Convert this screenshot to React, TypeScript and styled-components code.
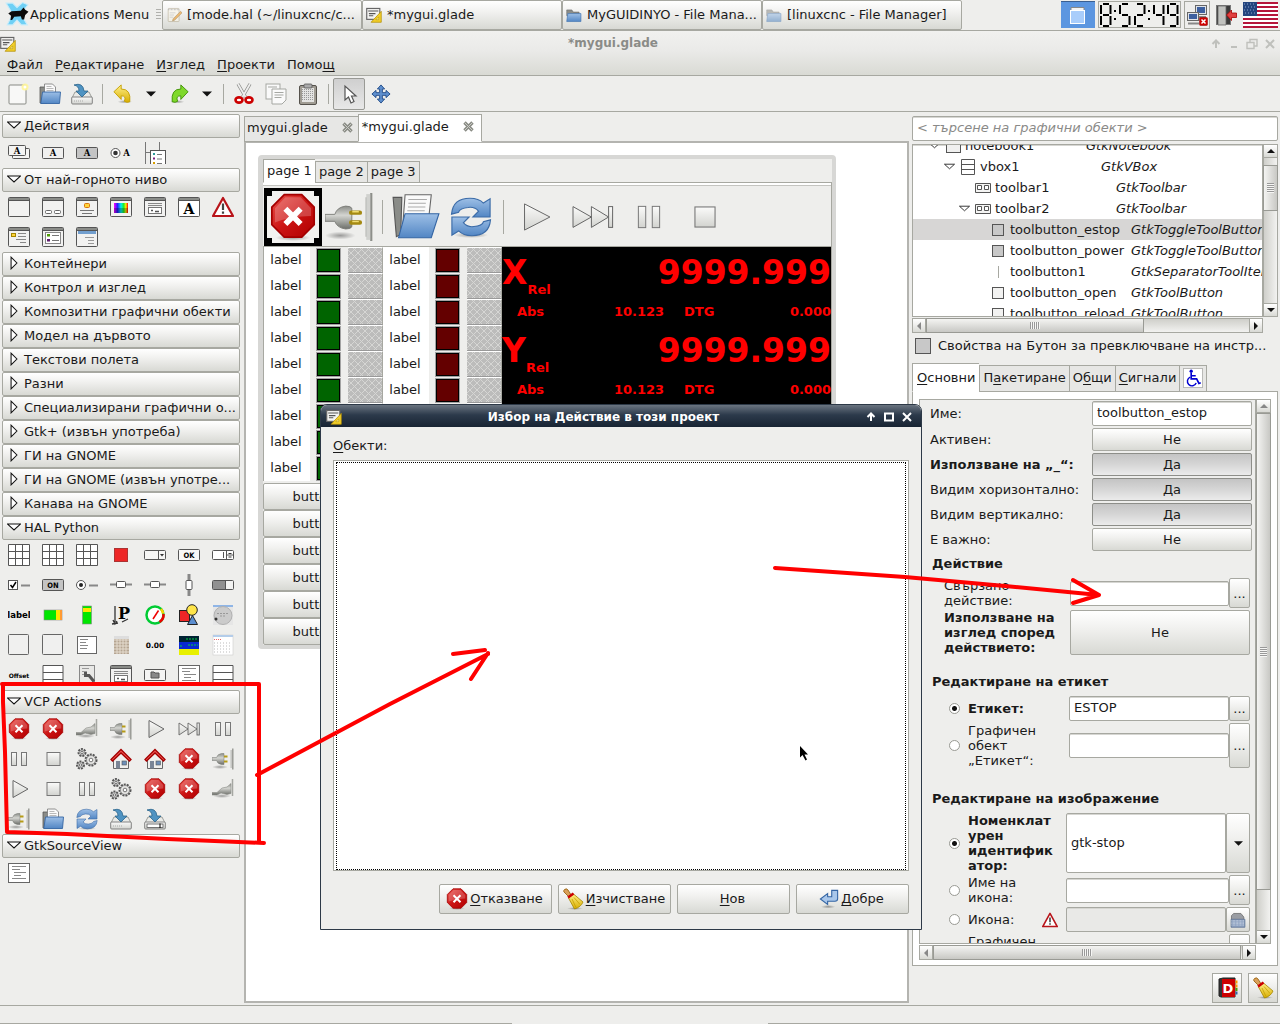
import React from 'react';
import styled, { createGlobalStyle, css } from 'styled-components';

const c = {
  bg: '#eeeeec',
  line: '#a7a8a1',
  soft: '#d6d6d2',
  text: '#1a1a1a',
  red: '#ff0000',
};
const raised = 'linear-gradient(#ffffff, #f1f1ef 40%, #d8d9d4)';
const pressed = 'linear-gradient(#c4c4c4, #d6d6d6 50%, #ebebeb)';

const Global = createGlobalStyle`
  * { box-sizing: border-box; }
  body { margin: 0; background: ${c.bg}; }
  body, button, input, select { font: 13px/15px "DejaVu Sans", sans-serif; color: ${c.text}; }
  button { padding: 0; margin: 0; border: 0; background: none; }
  u { text-underline-offset: 2px; }
  svg { display: block; flex: none; }
`;

/* ------------------------------------------------------------------ icons */

const HiddenSvg = styled.svg`
  position: absolute;
`;
const Defs = () => (
  <HiddenSvg width="0" height="0" aria-hidden="true">
    <defs>
      <linearGradient id="gRed" x1="0" y1="0" x2="1" y2="1"><stop offset="0" stopColor="#e8504a" /><stop offset=".5" stopColor="#cc1414" /><stop offset="1" stopColor="#b00000" /></linearGradient>
      <linearGradient id="gBlue" x1="0" y1="0" x2="0" y2="1"><stop offset="0" stopColor="#9dbfe6" /><stop offset="1" stopColor="#5286c4" /></linearGradient>
      <linearGradient id="gGrey" x1="0" y1="0" x2="0" y2="1"><stop offset="0" stopColor="#fbfbfa" /><stop offset="1" stopColor="#d2d3cf" /></linearGradient>
      <linearGradient id="gMetal" x1="0" y1="0" x2="0" y2="1"><stop offset="0" stopColor="#8b8d88" /><stop offset=".4" stopColor="#d4d5d1" /><stop offset="1" stopColor="#6d6f6a" /></linearGradient>
      <linearGradient id="gYellow" x1="0" y1="0" x2="0" y2="1"><stop offset="0" stopColor="#fff08a" /><stop offset="1" stopColor="#d9ae00" /></linearGradient>
      <linearGradient id="gRain" x1="0" y1="0" x2="1" y2="0"><stop offset="0" stopColor="#f0f" /><stop offset=".25" stopColor="#22f" /><stop offset=".5" stopColor="#0ee" /><stop offset=".7" stopColor="#2e2" /><stop offset=".85" stopColor="#fe0" /><stop offset="1" stopColor="#f00" /></linearGradient>
      <radialGradient id="gShadow"><stop offset="0" stopColor="#000" stopOpacity=".35" /><stop offset="1" stopColor="#000" stopOpacity="0" /></radialGradient>
    </defs>
  </HiddenSvg>
);

const WinFrame = ({ fill = '#f2f2f1' }: { fill?: string }) => (
  <g><rect x=".5" y="1.5" width="21" height="19" rx="1" fill={fill} stroke="#555" /><rect x="1" y="2" width="20" height="2" fill="#8a8c88" /><path d="M1 4.5h20" stroke="#555" /></g>
);
const T = ({ x, y, s, children, f = 'DejaVu Sans', fill = '#000' }: any) => (
  <text x={x} y={y} fontSize={s} fontWeight="bold" fontFamily={f} textAnchor="middle" fill={fill}>{children}</text>
);
const Vbox = () => <path d="M1 1.5h20v20H1zM1 8.5h20M1 15.5h20" fill="#fff" stroke="#555" />;
const Gear = ({ x, y, r }: any) => (
  <g><circle cx={x} cy={y} r={r} fill="#ddd" stroke="#555" strokeWidth="2" strokeDasharray="2 1" /><circle cx={x} cy={y} r={r - 1} fill="#e6e6e4" stroke="#777" strokeWidth=".7" /><circle cx={x} cy={y} r={r / 3} fill="#fff" stroke="#555" strokeWidth=".8" /></g>
);
const StopShape = ({ cross = 2 }: { cross?: number }) => (
  <g><ellipse cx="11" cy="20.5" rx="8" ry="1.5" fill="url(#gShadow)" />
    <path d="M7 .8h8l5.700 5.700v8L15 20.200H7L1.300 14.500v-8z" fill="url(#gRed)" stroke="#a40000" strokeWidth=".8" />
    <path d="M7.500 2h7l4.800 5v3.500q-9 0-16.600 3V7z" fill="#fff" opacity=".22" />
    <path d="M7.500 7.200l7 7M14.500 7.200l-7 7" stroke="#fff" strokeWidth={cross} /></g>
);
const PlugShape = () => (
  <g><ellipse cx="8" cy="19" rx="8" ry="2" fill="url(#gShadow)" />
    <path d="M0 9.500h4.500q1-3.500 5-4h2.500v11H9.500Q5.500 16 4.500 12.500H0z" fill="url(#gMetal)" stroke="#777974" strokeWidth=".5" />
    <path d="M12 8.500h3.500M12 13.500h3.500" stroke="#b69b17" strokeWidth="2" />
    <path d="M20.800 .5v21" stroke="#8d8f8a" strokeWidth="1.300" /><path d="M19.200 2v18" stroke="#c4c5c2" strokeWidth="1.500" /></g>
);
const BigPlugShape = () => (
  <g><ellipse cx="7" cy="19.500" rx="7" ry="1.800" fill="url(#gShadow)" />
    <path d="M0 9.800h4.500q1-3.300 5-3.800 2.300 0 2.800 1v8.500q-.5 1-2.800 1-4-.5-5-3.500H0z" fill="url(#gMetal)" stroke="#777974" strokeWidth=".4" />
    <path d="M12 9h4M12 13.500h4" stroke="#a48912" strokeWidth="2" strokeLinecap="round" /><path d="M12.500 8.600h3M12.500 13.100h3" stroke="#f0dc70" strokeWidth=".6" />
    <path d="M21.200 0v22" stroke="#8d8f8a" strokeWidth="1" /><path d="M19.800 .5v21" stroke="#d0d1ce" strokeWidth="1.800" /><path d="M18.800 2v18" stroke="#b5b6b2" strokeWidth=".5" /></g>
);
const DriveShape = () => (
  <g><path d="M4 9h14l3 6H1z" fill="#e9eae7" stroke="#888a85" strokeWidth=".8" /><rect x=".7" y="14" width="20.600" height="7" rx="1" fill="url(#gGrey)" stroke="#777" strokeWidth=".9" />
    <path d="M3 2q9-3 10 6h4l-6 6-6-6h3q0-5-5-6z" fill="#4f93c2" stroke="#2b658c" strokeWidth=".8" /></g>
);
const FolderShape = () => (
  <g><path d="M1 20V4h6l1 2v14z" fill="#8a8c88" stroke="#555" strokeWidth=".8" /><path d="M5.500 13V1h8l3 3v9z" fill="#fafafa" stroke="#777" strokeWidth=".8" /><path d="M7.500 3.500h5M7.500 5.500h7M7.500 7.500h7" stroke="#aaa" strokeWidth=".8" />
    <path d="M3.500 9H21.500L20.500 20.500H1.800z" fill="url(#gBlue)" stroke="#3465a4" strokeWidth=".9" /></g>
);
const BigFolderShape = () => (
  <g><path d="M.5 2h4l-.5 17-2 1z" fill="#8a8c88" stroke="#555" strokeWidth=".5" /><path d="M5 14L6 .8h12L17 10z" fill="#fafafa" stroke="#666" strokeWidth=".5" /><path d="M7.500 3h8.500M7.500 4.700h8M7.300 6.400h8M7 8.100h8" stroke="#aaa" strokeWidth=".5" />
    <path d="M6 9.500h15.500L18 20.500H3z" fill="url(#gBlue)" stroke="#3465a4" strokeWidth=".5" /></g>
);
const House = () => (
  <g><path d="M3.500 11L11 4l7.500 7v9.500h-15z" fill="#f0f0ee" stroke="#666" /><path d="M1 11.500L11 1.500l10 10-1.500 1.500L11 5l-8.500 8z" fill="#ef5350" stroke="#a40000" strokeWidth="1.300" /><rect x="6" y="13" width="4" height="7.500" fill="#7a8596" /><rect x="12" y="13" width="4.500" height="4" fill="#6d8fb8" stroke="#555" strokeWidth=".6" /></g>
);
const Broom = () => (
  <g><ellipse cx="13" cy="20.500" rx="8" ry="1.500" fill="url(#gShadow)" /><path d="M2.500 1.500q2-1.500 3.500.5l3.500 5.500-2.500 1.500-5-5q-1-1 .5-2.500z" fill="#d9a05a" stroke="#8f5902" strokeWidth=".8" />
    <path d="M6.500 10l5-4 9.500 8q-2 5-8.500 7z" fill="url(#gYellow)" stroke="#a58600" strokeWidth=".8" /><path d="M10 11l4 8.500M12 9.500l6 7" stroke="#c5a000" strokeWidth=".8" /><path d="M6 9.500l5.500-4" stroke="#cc0000" strokeWidth="2.500" /></g>
);
const GladeShape = () => (
  <g><rect x="1" y="2" width="18" height="15" fill="#f4f4f2" stroke="#666" strokeWidth="1.600" /><path d="M3 5.500h14M4 9h9M4 12h6" stroke="#555" strokeWidth="1.600" /><path d="M21 6v15H7z" fill="#f2cf2a" stroke="#b08c00" /><path d="M17.500 13.500v4h-4z" fill="#fff3a0" stroke="#b08c00" strokeWidth=".8" /></g>
);
const Warn = () => (
  <g><path d="M11 2L21 20H1z" fill="#fff" stroke="#b8141a" strokeWidth="2.200" strokeLinejoin="round" /><path d="M11 7.500v6.500M11 15.500v2.200" stroke="#444" strokeWidth="2.200" /></g>
);
const ReloadShape = () => (
  <g><ellipse cx="11" cy="20.500" rx="9" ry="1.500" fill="url(#gShadow)" /><path d="M.8 9.500Q1.500 1.200 10.500 1.200q4.500 0 7 2.500L21 1.500V11h-9L15 8q-2-2.500-5.500-2Q5 6.500 4.500 8.500z" fill="url(#gBlue)" stroke="#3c6ca8" strokeWidth=".6" />
    <path d="M21.200 12.500q-.7 8.300-9.700 8.300-4.500 0-7-2.500L1 20.500V11h9L7 14q2 2.500 5.500 2 4.500-.5 5-2.500z" fill="url(#gBlue)" stroke="#3c6ca8" strokeWidth=".6" /></g>
);

const art: Record<string, React.ReactNode> = {
  stop: <StopShape />, bigStop: <StopShape cross={2.6} />, plug: <PlugShape />, bigPlug: <BigPlugShape />, bigFolder: <BigFolderShape />,
  plugOff: <g><ellipse cx="10" cy="18" rx="9" ry="2" fill="url(#gShadow)" /><path d="M0 14.500h5l5-4.500 5-1 4-3.500v10l-4 1-6-1.500-4 2H0z" fill="url(#gMetal)" stroke="#8b8d88" strokeWidth=".6" /><path d="M20.500 1v17" stroke="#a5a7a2" strokeWidth="1.500" /></g>,
  play: <path d="M5 2.500L20 11 5 19.500z" fill="url(#gGrey)" stroke="#666" />,
  ff: <g fill="url(#gGrey)" stroke="#666" strokeWidth=".9"><path d="M1 5l9 6-9 6zM10 5l9 6-9 6z" /><rect x="19" y="5" width="2.300" height="12" /></g>,
  pause: <g fill="url(#gGrey)" stroke="#777"><rect x="3.500" y="4.500" width="5" height="13" /><rect x="13.500" y="4.500" width="5" height="13" /></g>,
  sq: <rect x="5" y="4.500" width="13" height="13" fill="url(#gGrey)" stroke="#777" />,
  bigPlay: <path d="M4 3l15.500 8L4 19z" fill="url(#gGrey)" stroke="#666" strokeWidth=".6" />,
  bigFf: <g fill="url(#gGrey)" stroke="#666" strokeWidth=".5"><path d="M1 5.800l9.200 5.200L1 16.200zM10.200 5.800l8.600 5.200-8.600 5.200z" /><rect x="18.800" y="5.800" width="2" height="10.400" /></g>,
  bigPause: <g fill="url(#gGrey)" stroke="#777" strokeWidth=".6"><rect x="4.500" y="4.500" width="4.500" height="13" /><rect x="13" y="4.500" width="4.500" height="13" /></g>,
  bigSq: <rect x="4.500" y="4.500" width="13" height="13" fill="url(#gGrey)" stroke="#777" strokeWidth=".7" />,
  gears: <g><Gear x={6} y={4.5} r={3.500} /><Gear x={4.500} y={17} r={3.500} /><Gear x={15} y={12} r={5.500} /></g>,
  house: <House />, folder: <FolderShape />, reload: <ReloadShape />,
  save: <g><DriveShape /><path d="M3 18h10" stroke="#aaa" strokeDasharray="1 1" /></g>,
  saveas: <g><DriveShape /><rect x="3" y="16" width="16" height="3.500" fill="#fff" stroke="#555" strokeWidth=".8" /><path d="M16 15.500v4.500" stroke="#000" /></g>,
  newdoc: <g><rect x="2" y="2" width="17" height="19" rx="1" fill="#f8f8f7" stroke="#888a85" /><circle cx="18" cy="4" r="3.500" fill="#fff59a" opacity=".9" /><circle cx="18" cy="4" r="1.500" fill="#fff" /></g>,
  undo: <g><ellipse cx="13" cy="19.500" rx="8" ry="2" fill="url(#gShadow)" /><path d="M1 8.500L9 1v4.500q11 0 9.500 14Q15 21 12.500 19q2.500-6-3.500-6v4z" fill="url(#gYellow)" stroke="#c4a000" /></g>,
  redo: <g><ellipse cx="9" cy="19.500" rx="8" ry="2" fill="url(#gShadow)" /><path d="M21 8.500L13 1v4.500Q2 5.500 3.500 19.500 7 21 9.500 19 7 13 13 13v4z" fill="#7fd92b" stroke="#3f8f06" /></g>,
  cut: <g><path d="M5 1l7.500 13M17 1L9.500 14" stroke="#888a85" strokeWidth="3.200" /><path d="M5 1l7.500 13M17 1L9.500 14" stroke="#eee" strokeWidth="1.800" /><ellipse cx="6" cy="17" rx="3.500" ry="2.600" fill="#fff" stroke="#cc0000" strokeWidth="2.600" /><ellipse cx="16" cy="17" rx="3.500" ry="2.600" fill="#fff" stroke="#cc0000" strokeWidth="2.600" /></g>,
  copy: <g fill="#fafafa" stroke="#a5a7a2"><rect x="1" y="1" width="14" height="15" /><path d="M7 6h14v11l-4 4H7z" /><path d="M9.500 9.500h9M9.500 12h9M9.500 14.500h7M3 4h9" /></g>,
  paste: <g><rect x="2.500" y="2.500" width="17" height="19" rx="1.500" fill="#a09c93" stroke="#55524c" /><rect x="5" y="5" width="12" height="14" fill="#e4e4e2" /><path d="M5 6.500h12M5 8.500h12M5 10.500h12M5 12.500h12M5 14.500h12M5 16.500h12" stroke="#999" strokeDasharray="1 1" /><rect x="7" y="1" width="8" height="4" rx="1" fill="#aaa" stroke="#555" strokeWidth=".8" /></g>,
  pointer: <path d="M7 3v14l3.500-3 2.500 6 3-1.500-2.500-5.500H18z" fill="#fff" stroke="#555" strokeWidth="1.200" />,
  move: <path d="M11 1l4 4.500h-2.500v4h4V7L21 11l-4.500 4v-2.500h-4v4H15L11 21l-4-4.500h2.500v-4h-4V15L1 11l4.500-4v2.500h4v-4H7z" fill="#5e8fce" stroke="#204a87" />,
  multiA: <g><rect x="4.500" y="6.500" width="17" height="10" rx="1" fill="#f4f4f3" stroke="#555" /><rect x=".5" y="3.500" width="17" height="10" rx="1" fill="#f4f4f3" stroke="#555" /><T x={9} y={12} s={8.500} f="DejaVu Serif">A</T></g>,
  btnA: <g><rect x=".5" y="5.500" width="21" height="11" rx="1" fill="#f0f0ef" stroke="#555" /><T x={11} y={14} s={8.500} f="DejaVu Serif">A</T></g>,
  togA: <g><rect x=".5" y="5.500" width="21" height="11" rx="1" fill="#c4c4c4" stroke="#555" /><T x={11} y={14} s={8.500} f="DejaVu Serif">A</T></g>,
  radA: <g><circle cx="5.500" cy="11" r="4.500" fill="#fff" stroke="#555" /><circle cx="5.500" cy="11" r="2.300" fill="#333" /><T x={16.500} y={14} s={8.500} f="DejaVu Serif">A</T></g>,
  listA: <g><path d="M1.500 0v22M15.500 0v8M2 10.500h4" stroke="#777" fill="none" /><rect x="6.500" y="8.500" width="15" height="15" fill="#fff" stroke="#555" /><rect x="9" y="11" width="2" height="2" fill="#2a9a9a" /><rect x="9" y="15.500" width="2" height="2" fill="#802080" /><rect x="9" y="20" width="2" height="2" fill="#d9a000" /><path d="M13 12.500h5M13 17h5M13 21.500h5" stroke="#777" /></g>,
  win: <WinFrame />,
  dialog: <g><WinFrame /><rect x="3.500" y="14.500" width="6" height="3" rx="1" fill="#fff" stroke="#666" /><rect x="12.500" y="14.500" width="6" height="3" rx="1" fill="#fff" stroke="#666" /></g>,
  about: <g><WinFrame /><rect x="8.500" y="7.500" width="5" height="4" rx="1" fill="#ffd43b" stroke="#d9730d" /><path d="M4 14.500h14M6 17.500h10" stroke="#777" /></g>,
  color: <g><WinFrame /><rect x="4" y="7" width="14" height="10" fill="url(#gRain)" /><rect x="4" y="12" width="14" height="5" fill="#000" opacity=".25" /></g>,
  fchoose: <g><WinFrame /><path d="M4 7.500h14M4 9.500h14" stroke="#888" /><rect x="4.500" y="11.500" width="13" height="6" fill="#fff" stroke="#777" /><path d="M7 14.500h2M11 15.500h4" stroke="#555" strokeWidth="1.500" /></g>,
  font: <g><WinFrame fill="#fff" /><T x={11} y={18} s={14} f="DejaVu Serif">A</T></g>,
  warn: <Warn />,
  assist: <g><WinFrame /><rect x="3.500" y="7.500" width="4" height="3" fill="#ffd43b" stroke="#a58600" /><path d="M10 7.500h8M10 10.500h8M8 13.500h10M12 16.500h6" stroke="#888" /></g>,
  recent: <g><WinFrame /><rect x="3.500" y="6.500" width="15" height="11" fill="#fff" stroke="#888" /><rect x="5" y="8" width="3" height="2.500" fill="#4e9a06" /><rect x="5" y="13" width="3" height="2.500" fill="#5c1a6b" /><path d="M10 9.500h7M10 14.500h7" stroke="#777" /></g>,
  input: <g><WinFrame /><rect x="2" y="5" width="18" height="3" fill="#729fcf" /><path d="M9 11.500h9M12 14.500h6M12 17.500h6" stroke="#999" /></g>,
  grid: <path d="M.5.5h21v21H.5zM.5 7.500h21M.5 14.500h21M7.500.5v21M14.500.5v21" fill="#fff" stroke="#555" />,
  redsq: <rect x="4.500" y="4.500" width="13" height="13" fill="#ed2626" stroke="#a33" />,
  combo: <g><rect x=".5" y="6.500" width="21" height="9" rx="1" fill="#f6f6f5" stroke="#555" /><path d="M14.500 6.500v9" stroke="#555" /><path d="M16 10h4l-2 2.500z" fill="#333" /></g>,
  ok: <g><rect x=".5" y="5.500" width="21" height="11" rx="1" fill="#f8f8f7" stroke="#555" /><T x={11} y={14} s={7.500} f="DejaVu Sans Condensed">OK</T></g>,
  spin: <g><rect x=".5" y="6.500" width="21" height="9" rx="1" fill="#fff" stroke="#555" /><path d="M14.500 6.500v9M11.500 8v6M14.500 11h7" stroke="#555" /><path d="M16.500 9.500h3M16.500 13h3" stroke="#333" /></g>,
  check: <g><rect x=".5" y="6.500" width="9" height="9" fill="#fff" stroke="#555" /><path d="M2.500 11l2 2.500L8 8" stroke="#000" strokeWidth="1.500" fill="none" /><path d="M13 11.500h9" stroke="#888" strokeWidth="2" /></g>,
  on: <g><rect x=".5" y="5.500" width="21" height="11" rx="1" fill="#c4c4c4" stroke="#555" /><T x={11} y={14} s={7.500} f="DejaVu Sans Condensed">ON</T></g>,
  radio: <g><circle cx="5" cy="11" r="4.500" fill="#fff" stroke="#555" /><circle cx="5" cy="11" r="2" fill="#222" /><path d="M13 11.500h9" stroke="#888" strokeWidth="2" /></g>,
  hscale: <g><path d="M0 10.500h22" stroke="#888" strokeWidth="2" /><rect x="6.500" y="7.500" width="9" height="6" rx="1" fill="#fff" stroke="#555" /></g>,
  vscale: <g><path d="M11 0v22" stroke="#888" strokeWidth="3" /><rect x="8" y="6.500" width="6" height="9" rx="1" fill="#fff" stroke="#555" /></g>,
  prog: <g><rect x=".5" y="6.500" width="21" height="9" rx="1" fill="#f2f2f1" stroke="#555" /><rect x="1" y="7" width="12" height="8" fill="#909090" /><path d="M13.500 6.500v9" stroke="#555" /></g>,
  label: <T x={11} y={14} s={8.500}>label</T>,
  hbar: <g><rect x="2" y="6" width="18" height="10" fill="#00e600" stroke="#888" strokeWidth=".6" /><rect x="14" y="6" width="4" height="10" fill="#ffe600" /><rect x="18" y="6" width="2" height="10" fill="#ff9a33" /></g>,
  vbar: <g><rect x="6.500" y="2" width="9" height="18" fill="#00e600" stroke="#888" strokeWidth=".6" /><rect x="7" y="4" width="8" height="4" fill="#ffe600" /></g>,
  pyvcp: <g><T x={14} y={15} s={16} f="DejaVu Serif">P</T><path d="M5 2v16M3 16l2 4 2-3M2 20l6-1M12 18l6-3" stroke="#333" strokeWidth="1.300" fill="none" /></g>,
  meter: <g><circle cx="11" cy="11" r="8.500" fill="#fff" stroke="#0c3" strokeWidth="2.500" /><path d="M17 5a8.500 8.500 0 0 1 2 4.500" stroke="#ffd400" strokeWidth="2.500" fill="none" /><path d="M19.500 10a8.500 8.500 0 0 1-4 8" stroke="#e00" strokeWidth="2.500" fill="none" /><path d="M14.500 6.500L9 15" stroke="#e00" strokeWidth="1.500" /></g>,
  shapes: <g stroke="#222"><rect x="1.500" y="6.500" width="10" height="11" fill="#ed2626" /><circle cx="14" cy="6" r="5.300" fill="#ffe54a" /><path d="M14.500 11.500l5 9h-10z" fill="#5b8ed0" /></g>,
  jog: <g><rect x="1" y="1" width="20" height="20" fill="#e6e6e6" /><rect x="1" y="1" width="20" height="2" fill="#8fb5e6" /><circle cx="11" cy="11.500" r="9" fill="#cbcbcb" stroke="#b0b0b0" /><path d="M5 9.500h11M8 12h5" stroke="#999" strokeDasharray="2 1" /><circle cx="4" cy="15" r="1.500" fill="#333" /></g>,
  box: <rect x=".5" y=".5" width="20" height="20" rx="1" fill="#f0f0ef" stroke="#666" />,
  tview: <g><rect x="1.500" y="2.500" width="19" height="17" fill="#fff" stroke="#666" /><path d="M4 5.500h8M4 8.500h6M4 11.500h8M4 14.500h7" stroke="#888" /></g>,
  calc: <g><rect x="4" y="2" width="15" height="18" fill="#b5a592" /><path d="M4 6h15M4 9h15M4 12h15M4 15h15M4 18h15M7 5v15M10 5v15M13 5v15M16 5v15" stroke="#e5dccf" /><rect x="4" y="2" width="15" height="3" fill="#ddd" /></g>,
  zero: <T x={11} y={14} s={7.500}>0.00</T>,
  dro: <g><rect x="1" y="2" width="20" height="6" fill="#023" /><rect x="1" y="8" width="20" height="7" fill="#0828d0" /><rect x="1" y="15" width="20" height="6" fill="#e8f000" /><path d="M8 5h12M10 11h10M2 12h3" stroke="#0c4" strokeDasharray="2 1" /></g>,
  cal: <g><rect x="1" y="1" width="20" height="20" fill="#fff" stroke="#ccc" strokeWidth=".6" /><rect x="1" y="1" width="20" height="2" fill="#b4cdea" /><path d="M2 5.500h8" stroke="#e66" strokeDasharray="1 1" /><path d="M2 9h18M2 12h18M2 15h18M2 18h18" stroke="#bbb" strokeDasharray="1 2" /></g>,
  offset: <T x={11} y={14} s={6}>Offset</T>,
  vbox: <Vbox />,
  wrench: <g><rect x="3.500" y="1.500" width="15" height="19" fill="#e8e8e6" stroke="#888" /><path d="M6 4.500h7M6 7.500h5M6 10.500h3" stroke="#999" /><path d="M9.500 8v3.500h3.500l5 6" stroke="#555" strokeWidth="3" fill="none" /></g>,
  fbtn: <g><rect x=".5" y="5.500" width="21" height="11" rx="1" fill="#f4f4f3" stroke="#555" /><path d="M7 8h3l1 1h4v5H7z" fill="#888" stroke="#555" /></g>,
  source: <g><rect x=".5" y="1.500" width="21" height="19" fill="#fff" stroke="#666" /><path d="M4 4.500h14M4 7.500h8M6 10.500h12M6 13.500h7M4 16.500h14" stroke="#888" /></g>,
  glade: <GladeShape />, broom: <Broom />,
  notepad: <g><rect x="3" y="2" width="15" height="18" rx="1" fill="#fdf9ec" stroke="#a0926f" /><path d="M3 3.500h15" stroke="#888" strokeDasharray="1 1" strokeWidth="2" /><path d="M5 8h8M5 11h6M5 14h5" stroke="#aaa" /><path d="M20 6l2 2-10 10-3 1 1-3z" fill="#f09010" stroke="#90601a" strokeWidth="1" /></g>,
  fm: <g><path d="M1 6V4h7l2 3h8v5H1z" fill="#8a8c88" stroke="#666" strokeWidth=".8" /><path d="M2.500 9h18v11H1z" fill="url(#gBlue)" stroke="#4a7ab5" /></g>,
  enter: <g><ellipse cx="10" cy="19.500" rx="8" ry="2" fill="url(#gShadow)" /><path d="M14 1.500h6.500v9q0 3-3 3H9.500V17L1.500 11l8-6v3.500H14z" fill="#a9c7ea" stroke="#3465a4" strokeWidth="1.200" /></g>,
  book: <g><path d="M3 2l4-1h12v19H5l-2-1z" fill="#333" stroke="#222" /><rect x="6" y="2" width="13" height="18" fill="#cc0000" /><path d="M20.500 3.500v3M20.500 7.500v3" stroke="#ff9a00" strokeWidth="2" /><path d="M20.500 11v3" stroke="#4e9a06" strokeWidth="2" /><path d="M20.500 14.500v3" stroke="#3465a4" strokeWidth="2" /><T x={12} y={15.5} s={13} fill="#fff">D</T></g>,
  wheel: <g><rect x=".5" y=".5" width="21" height="21" fill="#fff" stroke="#b5b5b2" /><circle cx="9" cy="3.500" r="1.800" fill="#0000d0" /><path d="M9 5v7h6l2.500 5 2-.8M9 8.500h5" stroke="#0000d0" strokeWidth="1.800" fill="none" /><path d="M8 10a5 5 0 1 0 6.500 6.500" stroke="#0000d0" strokeWidth="1.600" fill="none" /></g>,
  xfce: <g><path d="M1 1h6l4 4 5-4.500 5 2L14.500 11l6 10h-5.500l-4-4.500-4 4.500H2l5-10z" fill="#6fd0f5" stroke="#c8ecfa" /><path d="M0 8l3 2.500 3-2 8.500-.5 2.500-3 1.500 2 3 2-2 2-1 1-1 4h-2l-1-3-6 .5-2 3H5l.5-4z" fill="#0a0a0a" /></g>,
  net: <g><rect x="9.500" y="1.500" width="11" height="9" fill="#dfe3e8" stroke="#666" /><rect x="11" y="3" width="8" height="6" fill="#3c5f9f" /><path d="M10 13h10" stroke="#888" strokeWidth="2" /><rect x="1.500" y="8.500" width="11" height="8" fill="#dfe3e8" stroke="#666" /><rect x="3" y="10" width="8" height="5" fill="#3c5f9f" /><path d="M2 19.500h11" stroke="#888" strokeWidth="2" /><rect x="13.500" y="13.500" width="8" height="8" rx="1" fill="#d00000" stroke="#800" strokeWidth=".5" /><path d="M15.500 15.500l4 4M19.500 15.500l-4 4" stroke="#fff" strokeWidth="1.500" /></g>,
  logout: <g><rect x="1.500" y="1.500" width="14" height="19" fill="#3a3a3a" stroke="#777" /><path d="M3 2h8v19H3z" fill="#c0c1be" stroke="#666" strokeWidth=".8" /><path d="M11.500 11l5-5v3h5v4.500h-5v3z" fill="#e04040" stroke="#a00" strokeWidth=".8" /></g>,
  folderGrey: <g><path d="M2 20V5l3-3h10l4 5v13z" fill="#9a9da3" stroke="#666" /><path d="M1.500 10h19v11h-19z" fill="#8fa3c2" stroke="#5a6f92" /><path d="M2 12h18M2 14h18M2 16h18M2 18h18" stroke="#dfe6ef" strokeDasharray="1 1" /></g>,
};

const Icon = ({ n, size = 22 }: { n: string; size?: number }) => (
  <svg width={size} height={size} viewBox="0 0 22 22" aria-hidden="true">{art[n]}</svg>
);
const Tri = ({ open, w = 12 }: { open?: boolean; w?: number }) => (
  <svg width={w} height={w} viewBox="0 0 12 12" aria-hidden="true">
    <path d={open ? 'M.5 3.500h11L6 8.500z' : 'M3.500 1v10l5-5z'} fill="#fff" stroke="#111" strokeWidth=".9" />
  </svg>
);
const arrowPath = { up: 'M0 6h8L4 2z', down: 'M0 2h8L4 6z', left: 'M6 0v8L2 4z', right: 'M2 0v8l4-4z' };
const Arrow = ({ d, size = 8, color = '#111' }: { d: keyof typeof arrowPath; size?: number; color?: string }) => (
  <svg width={size} height={size} viewBox="0 0 8 8" aria-hidden="true"><path d={arrowPath[d]} fill={color} /></svg>
);

/* ---------------------------------------------------------------- desktop */

const Desktop = styled.div`
  position: relative;
  height: 100vh;
  display: flex;
  flex-direction: column;
  overflow: hidden;
  background: ${c.bg};
`;
const Taskbar = styled.nav`
  display: flex;
  align-items: stretch;
  height: 31px;
  border-bottom: 1px solid ${c.line};
`;
const AppsMenu = styled.button`
  display: flex;
  align-items: center;
  gap: 1px;
  padding: 0 0 2px 5px;
  width: 154px;
  white-space: nowrap;
`;
const Grip = styled.i`
  width: 5px;
  height: 12px;
  align-self: center;
  margin: 0 1px 0 2px;
  background: repeating-linear-gradient(#b0b0ac 0 1px, transparent 1px 3px);
`;
const Task = styled.button<{ $faded?: boolean }>`
  display: flex;
  align-items: center;
  gap: 5px;
  flex: 0 1 200px;
  min-width: 0;
  padding: 0 4px 1px 3px;
  overflow: hidden;
  white-space: nowrap;
  border: 1px solid ${c.line};
  border-radius: 2px;
  background: ${raised};
  svg { opacity: ${p => (p.$faded ? 0.55 : 1)}; }
`;
const Tray = styled.div`
  display: flex;
  align-items: center;
  margin-left: auto;
  padding: 0 2px 1px 0;
`;
const Pager = styled.div`
  display: grid;
  place-items: center;
  width: 34px;
  height: 27px;
  margin-right: 3px;
  border-top: 1px solid #3a5f91;
  background: #5c96e0;
`;
const Lcd = styled.div`
  display: grid;
  place-items: center;
  width: 83px;
  height: 27px;
  border: 1px solid ${c.line};
`;
const TrayButton = styled.button<{ $framed?: boolean }>`
  display: grid;
  place-items: center;
  width: 26px;
  height: 28px;
  margin-left: 3px;
  border: 1px solid ${p => (p.$framed ? c.line : 'transparent')};
`;
const FlagBox = styled.span`
  margin-left: 4px;
`;

const segs: Record<string, string> = { '8': 'abcdefg', '5': 'afgcd', '2': 'abged', '4': 'fgbc', '9': 'abcdfg' };
const segLine: Record<string, number[]> = {
  a: [3, 1, 9, 1], b: [10.5, 2, 10.5, 11], c: [10.5, 13, 10.5, 22], d: [3, 23, 9, 23], e: [1, 13, 1, 22], f: [1, 2, 1, 11], g: [3, 12, 9, 12],
};
const slots = [0, 14, 19, 34, 48, 53, 67];
const ClockFace = ({ time }: { time: string }) => (
  <svg width="79" height="24" viewBox="0 0 79 24" role="img" aria-label={time}>
    {time.split('').map((ch, i) => ch === ':' ? (
      <g key={i}><rect x={slots[i]} y="7" width="2" height="2" /><rect x={slots[i]} y="15" width="2" height="2" /></g>
    ) : (
      <g key={i} stroke="#000" strokeWidth="2">
        {segs[ch].split('').map(s => { const [a, b, d, e] = segLine[s]; return <line key={s} x1={slots[i] + a} y1={b} x2={slots[i] + d} y2={e} />; })}
      </g>
    ))}
  </svg>
);
const Flag = () => (
  <svg width="35" height="26" viewBox="0 0 35 26" role="img" aria-label="US">
    <rect width="35" height="26" fill="#fff" />
    {[0, 4, 8, 12, 16, 20, 24].map(y => <rect key={y} y={y} width="35" height="2" fill="#b5153a" />)}
    <rect width="14" height="14" fill="#24457e" />
    <path d="M1 2h12M2 5h11M1 8h12M2 11h11" stroke="#8ca6cc" strokeDasharray="1 2" />
  </svg>
);

/* ------------------------------------------------------------ glade window */

const WindowTop = styled.header`
  height: 45px;
  border-bottom: 1px solid ${c.line};
  background: linear-gradient(#f1f1ef, #eaeae8 45%, #d9dad4);
`;
const TitleRow = styled.div`
  display: flex;
  align-items: center;
  height: 25px;
  padding-right: 4px;
`;
const Title = styled.h1<{ $light?: boolean }>`
  flex: 1;
  margin: 0;
  text-align: center;
  font-size: 12px;
  line-height: 15px;
  color: ${p => (p.$light ? '#fff' : '#8a8b87')};
`;
const WinButtons = styled.div`
  display: flex;
  gap: 6px;
`;
const WinButton = styled.button`
  display: grid;
  place-items: center;
  width: 12px;
  height: 14px;
`;
const winGlyph: Record<string, React.ReactNode> = {
  shade: <path d="M6 10V2M2.500 6L6 2.500 9.500 6" />,
  min: <path d="M3 9h6" />,
  restore: <path d="M4 4V1.500h7V8H8.500M1 4.500h7v6H1z" strokeWidth="1.400" />,
  max: <path d="M2 2.500h8v7H2z" />,
  close: <path d="M2 2l8 8M10 2l-8 8" />,
};
const WinControls = ({ kinds, color }: { kinds: string[]; color: string }) => (
  <WinButtons>
    {kinds.map(k => (
      <WinButton key={k} aria-label={k}>
        <svg width="12" height="12" viewBox="0 0 12 12" fill="none" stroke={color} strokeWidth="2">{winGlyph[k]}</svg>
      </WinButton>
    ))}
  </WinButtons>
);
const MenuRow = styled.nav`
  display: flex;
  height: 16px;
  padding-left: 1px;
  button { padding: 0 6px; }
`;
const Toolbar = styled.div`
  display: flex;
  align-items: center;
  height: 36px;
  padding-left: 2px;
  border-bottom: 1px solid ${c.line};
`;
const Tool = styled.button<{ $w?: number; $on?: boolean }>`
  display: grid;
  place-items: center;
  width: ${p => p.$w ?? 32}px;
  height: 32px;
  ${p => p.$on && css`border: 1px solid #999a95; border-radius: 2px; background: linear-gradient(#cfcfcf, #e8e8e8);`}
`;
const Sep = styled.i<{ $w?: number; $h?: number }>`
  width: ${p => p.$w ?? 9}px;
  height: ${p => p.$h ?? 20}px;
  background: linear-gradient(${c.line}, ${c.line}) center / 1px 100% no-repeat;
`;
const Main = styled.main`
  display: grid;
  grid-template-columns: 242px minmax(0, 1fr) 368px;
  flex: 1;
  min-height: 0;
  padding: 2px;
`;
const StatusBar = styled.footer`
  display: flex;
  justify-content: space-between;
  height: 19px;
  border-top: 1px solid ${c.line};
  &::before, &::after { content: ''; width: 40%; border-bottom: 1px solid ${c.line}; }
`;

/* ----------------------------------------------------------------- palette */

const Palette = styled.aside`
  width: 238px;
  overflow: hidden;
`;
const GroupHead = styled.button`
  display: flex;
  align-items: center;
  gap: 3px;
  width: 100%;
  height: 24px;
  padding: 0 4px 2px;
  overflow: hidden;
  white-space: nowrap;
  border: 1px solid ${c.line};
  border-radius: 2px;
  background: ${raised};
`;
const GroupIcons = styled.div`
  display: grid;
  grid-template-columns: repeat(7, 34px);
  grid-auto-rows: 30px;
`;
const IconSlot = styled.button`
  display: grid;
  place-items: center;
  overflow: hidden;
`;
const groups: [string, string?][] = [
  ['Действия', 'multiA btnA togA radA listA'],
  ['От най-горното ниво', 'win dialog about color fchoose font warn assist recent input'],
  ['Контейнери'], ['Контрол и изглед'], ['Композитни графични обекти'], ['Модел на дървото'], ['Текстови полета'],
  ['Разни'], ['Специализирани графични о...'], ['Gtk+ (извън употреба)'], ['ГИ на GNOME'], ['ГИ на GNOME (извън употре...'], ['Канава на GNOME'],
  ['HAL Python', 'grid grid grid redsq combo ok spin check on radio hscale hscale vscale prog label hbar vbar pyvcp meter shapes jog box box tview calc zero dro cal offset vbox wrench fchoose fbtn source vbox'],
  ['VCP Actions', 'stop stop plugOff plug play ff pause pause sq gears house house stop plug play sq pause gears stop stop plugOff plug folder reload save saveas'],
  ['GtkSourceView', 'source'],
];

/* --------------------------------------------------------------- workspace */

const TabStrip = styled.div`
  display: flex;
  align-items: flex-end;
  margin-bottom: -1px;
  z-index: 1;
`;
const Tab = styled.button<{ $on?: boolean; $h: number }>`
  display: flex;
  align-items: center;
  height: ${p => p.$h + (p.$on ? 2 : 0)}px;
  padding: 0 3px 2px;
  white-space: nowrap;
  border: 1px solid ${c.line};
  border-right-width: 0;
  border-bottom-color: ${p => (p.$on ? '#fff' : c.line)};
  background: ${p => (p.$on ? '#fff' : '#e7e7e5')};
  &:last-child { border-right-width: 1px; }
`;
const PropTab = styled(Tab)`
  &:first-child { padding: 0 4px 1px; }
`;
const DocTab = styled(Tab)`
  gap: 14px;
  &:first-child { padding: 0 5px 3px 2px; }
  &:last-child { padding: 0 7px 3px 3px; }
`;
const Notebook = styled.section`
  display: flex;
  flex-direction: column;
  min-height: 0;
  min-width: 0;
  margin-right: 1px;
`;
const Canvas = styled.div`
  flex: 1;
  min-height: 0;
  padding: 12px;
  overflow: hidden;
  border: 2px solid #b4b4b0;
  background: #fff;
`;
const Preview = styled.div`
  width: 578px;
  border: 4px solid #d7d7d5;
  border-left-width: 5px;
  border-radius: 4px;
  background: ${c.bg};
`;
const PreviewToolbar = styled.div`
  display: flex;
  align-items: center;
  height: 65px;
  padding-top: 5px;
  border: 1px solid ${c.line};
  border-left-width: 0;
  box-shadow: inset 0 2px 0 #fff, inset 0 3px 0 #c4c4c0;
`;
const BigTool = styled.button<{ $w: number; $sel?: boolean }>`
  display: grid;
  place-items: center;
  width: ${p => p.$w}px;
  height: 58px;
  ${p => p.$sel && css`
    border: 3px solid #000;
    margin-left: 1px;
    background:
      linear-gradient(#000, #000) 0 0 / 5px 5px, linear-gradient(#000, #000) 100% 0 / 5px 5px,
      linear-gradient(#000, #000) 0 100% / 5px 5px, linear-gradient(#000, #000) 100% 100% / 5px 5px, #f2f2f0;
    background-repeat: no-repeat;
  `}
`;
const PreviewBody = styled.div`
  display: grid;
  grid-template-columns: 119px 119px 1fr;
  border-left: 1px solid ${c.line};
  border-right: 1px solid ${c.line};
`;
const LedRow = styled.div`
  display: grid;
  grid-template-columns: 46px 38px 35px;
  height: 26px;
`;
const LedLabel = styled.span`
  display: grid;
  place-items: center;
  padding: 0 2px 2px 0;
  background: #fff;
`;
const Led = styled.span<{ $c: string }>`
  width: 23px;
  height: 23px;
  margin: 2px 0 0 7px;
  border: 1px solid #000;
  box-shadow: 0 0 0 1px #a3a3a3;
  background: ${p => p.$c};
`;
const Hatch = styled.span`
  border-bottom: 1px solid #999;
  border-top: 1px solid #fff;
  border-right: 1px solid ${c.line};
  background:
    repeating-linear-gradient(45deg, #d6d6d4 0 1px, transparent 1px 5px),
    repeating-linear-gradient(-45deg, #d6d6d4 0 1px, transparent 1px 5px), #bcbcbb;
`;
const Dro = styled.div`
  padding-top: 5px;
  background: #000;
  color: ${c.red};
  font-weight: bold;
`;
const DroAxis = styled.div`
  height: 78px;
  &:last-child { height: 73px; overflow: hidden; }
`;
const DroMain = styled.div`
  display: flex;
  justify-content: space-between;
  height: 51px;
  font-size: 33px;
  line-height: 42px;
  sub { font-size: 13px; line-height: 1px; vertical-align: -10px; }
`;
const DroSub = styled.div`
  display: grid;
  grid-template-columns: 15px 97px 50px 20px 1fr auto;
  line-height: 18px;
`;
const PreviewButtons = styled.div`
  display: flex;
  flex-direction: column;
  width: 102px;
  padding-top: 2px;
`;
const PreviewButton = styled.button`
  height: 27px;
  padding-bottom: 1px;
  border: 1px solid ${c.line};
  border-radius: 2px;
  background: ${raised};
`;

/* --------------------------------------------------------------- inspector */

const Inspector = styled.aside`
  display: flex;
  flex-direction: column;
  min-width: 0;
  min-height: 0;
  padding: 2px 0 0 2px;
`;
const field = css`
  min-width: 0;
  height: 25px;
  padding: 0 5px 2px 4px;
  border: 1px solid ${c.line};
  border-radius: 2px;
  box-shadow: inset 0 1px 0 ${c.soft};
  background: #fff;
  color: ${c.text};
`;
const Search = styled.input`
  ${field}
  width: 100%;
  margin-bottom: 3px;
  &::placeholder { color: #8a8a88; font-style: italic; opacity: 1; }
`;
const ScrollGrid = styled.div`
  display: grid;
  grid-template-columns: minmax(0, 1fr) 15px;
  grid-template-rows: minmax(0, 1fr) 15px;
  gap: 1px 0;
  min-height: 0;
`;
const TreeArea = styled(ScrollGrid)`
  height: 189px;
  flex: none;
`;
const TreeView = styled.div`
  overflow: hidden;
  border: 1px solid ${c.line};
  box-shadow: inset 0 1px 0 ${c.soft};
  background: #fff;
`;
const TreeTable = styled.table`
  width: 100%;
  margin-top: -10px;
  border-collapse: collapse;
  table-layout: fixed;
  td { padding: 0; overflow: hidden; }
`;
const TreeLine = styled.div<{ $depth: number; $sel?: boolean }>`
  display: grid;
  grid-template-columns: 16px 16px 117px max-content;
  align-items: center;
  height: 21px;
  padding-left: ${p => 16 + p.$depth * 15}px;
  background: ${p => (p.$sel ? '#d7d6d5' : 'transparent')};
  white-space: nowrap;
  span { padding-left: 4px; }
  em { padding-left: 8px; }
`;
const IconCell = styled.div`
  display: grid;
  place-items: center;
`;
const Bar = styled.div<{ $v?: boolean }>`
  display: flex;
  flex-direction: ${p => (p.$v ? 'column' : 'row')};
  background: linear-gradient(${p => (p.$v ? '90deg' : '180deg')}, #cfcfca, #f2f2f0);
  border: 1px solid ${c.line};
  button { display: grid; place-items: center; flex: 0 0 14px; background: ${raised}; border: 1px solid ${c.line}; margin: -1px; }
`;
const Thumb = styled.div<{ $f: number; $v?: boolean }>`
  display: grid;
  place-items: center;
  flex: ${p => p.$f} 1 0;
  margin: ${p => (p.$v ? '1px -1px' : '-1px 1px')};
  border: 1px solid #999a94;
  background: linear-gradient(${p => (p.$v ? '90deg' : '180deg')}, #f4f4f2, #c8c8c4);
  i {
    width: ${p => (p.$v ? 7 : 10)}px;
    height: ${p => (p.$v ? 10 : 7)}px;
    background: repeating-linear-gradient(${p => (p.$v ? '180deg' : '90deg')}, #999 0 1px, #f6f6f4 1px 2px);
  }
`;
const Gap = styled.i<{ $f: number }>`
  flex: ${p => p.$f} 1 0;
`;
const Scroll = ({ v, a, t, b }: { v?: boolean; a: number; t: number; b: number }) => (
  <Bar $v={v}>
    <button type="button" aria-label={v ? 'up' : 'left'}><Arrow d={v ? 'up' : 'left'} color={a ? '#111' : '#888'} /></button>
    <Gap $f={a} /><Thumb $f={t} $v={v}><i /></Thumb><Gap $f={b} />
    <button type="button" aria-label={v ? 'down' : 'right'}><Arrow d={v ? 'down' : 'right'} /></button>
  </Bar>
);
const PropsTitle = styled.div`
  display: flex;
  align-items: center;
  gap: 7px;
  height: 30px;
  padding: 0 0 5px 3px;
  white-space: nowrap;
  overflow: hidden;
`;
const Chip = styled.i<{ $s: number; $c: string }>`
  width: ${p => p.$s}px;
  height: ${p => p.$s}px;
  border: 1px solid #555;
  background: ${p => p.$c};
`;
const PropsPage = styled.div`
  display: flex;
  flex: 1;
  min-height: 0;
  padding: 7px 6px 5px;
  border: 1px solid ${c.line};
  background: #fff;
`;
const PropsScroll = styled(ScrollGrid)`
  flex: 1;
`;
const Form = styled.form`
  overflow: hidden;
  padding: 1px 3px 0 10px;
  border: 1px solid ${c.line};
  background: ${c.bg};
`;
const FormRow = styled.div<{ $h: number; $c: number; $pad?: number }>`
  display: grid;
  grid-template-columns: minmax(0, 1fr) ${p => p.$c}px;
  align-items: center;
  min-height: ${p => p.$h}px;
  margin-bottom: 2px;
  padding-left: ${p => p.$pad ?? 0}px;
  padding-right: ${p => (p.$pad ? 2 : 0)}px;
`;
const Label = styled.label<{ $b?: boolean }>`
  font-weight: ${p => (p.$b ? 'bold' : 'normal')};
  white-space: nowrap;
`;
const RadioLabel = styled(Label)`
  display: flex;
  align-items: center;
  gap: 8px;
  span { flex: 1; }
  svg { margin-right: 8px; }
`;
const Radio = styled.input`
  appearance: none;
  flex: none;
  width: 11px;
  height: 11px;
  margin: 0;
  border: 1px solid #999a94;
  border-radius: 50%;
  background: #fff;
  &:checked { background: radial-gradient(#111 0 2px, #fff 3px); }
`;
const Input = styled.input`
  ${field}
  flex: 1;
  width: 100%;
  &:disabled { background: #e9e9e7; }
`;
const Toggle = styled.button<{ $on?: boolean; $h?: number }>`
  height: ${p => p.$h ?? 23}px;
  padding-bottom: 1px;
  border: 1px solid ${p => (p.$on ? '#8d8e89' : c.line)};
  border-radius: 2px;
  background: ${p => (p.$on ? pressed : raised)};
`;
const Pair = styled.div`
  display: flex;
  align-items: center;
  align-self: stretch;
`;
const More = styled.button<{ $w?: number }>`
  display: grid;
  place-items: center;
  align-self: stretch;
  width: ${p => p.$w ?? 21}px;
  border: 1px solid ${c.line};
  border-radius: 2px;
  background: ${raised};
`;
const Select = styled.select`
  ${field}
  appearance: none;
  flex: 1;
  height: 60px;
`;
const SectionTitle = styled.h2<{ $top: number; $bottom: number }>`
  margin: ${p => p.$top}px 0 ${p => p.$bottom}px 2px;
  font-size: 13px;
  line-height: 15px;
`;
const FootTools = styled.div`
  display: flex;
  justify-content: flex-end;
  gap: 6px;
  padding-top: 7px;
`;
const FootButton = styled.button`
  display: grid;
  place-items: center;
  width: 30px;
  height: 30px;
  border: 1px solid ${c.line};
  background: ${raised};
`;

/* ------------------------------------------------------------------ dialog */

const Dialog = styled.section`
  position: absolute;
  left: 320px;
  top: 404px;
  width: 602px;
  height: 526px;
  display: flex;
  flex-direction: column;
  border: 1px solid #2d3947;
  border-radius: 7px 7px 0 0;
  background: ${c.bg};
  overflow: hidden;
`;
const DialogTitle = styled.div`
  display: flex;
  align-items: center;
  height: 22px;
  padding: 2px 8px 0 5px;
  background: linear-gradient(#6a7480, #2c3a4b 45%, #182433);
`;
const DialogBody = styled.div`
  display: flex;
  flex-direction: column;
  flex: 1;
  padding: 11px 12px 15px;
`;
const ObjectList = styled.div`
  flex: 1;
  margin: 7px 0 13px;
  padding: 1px 2px 2px;
  border: 1px solid ${c.line};
  background: #fff;
  &::before { content: ''; display: block; height: 100%; border: 1px dotted #000; }
`;
const DialogActions = styled.div`
  display: flex;
  justify-content: flex-end;
  gap: 6px;
`;
const DialogButton = styled.button`
  display: flex;
  align-items: center;
  justify-content: center;
  gap: 2px;
  width: 113px;
  height: 30px;
  padding: 0 2px 1px 0;
  white-space: nowrap;
  border: 1px solid ${c.line};
  border-radius: 2px;
  background: ${raised};
`;
const Marks = styled.svg`
  position: absolute;
  left: 0;
  top: 0;
  pointer-events: none;
`;

/* -------------------------------------------------------------------- data */

const VIcon = () => <svg width="14" height="16" viewBox="0 0 14 16"><path d="M.5.500h13v15H.5zM.5 5.500h13M.5 10.500h13" fill="#fff" stroke="#555" /></svg>;
const TIcon = () => <svg width="16" height="10" viewBox="0 0 16 10"><path d="M.5.500h15v9H.5z" fill="#f4f4f3" stroke="#555" /><path d="M2.500 2.500h4v4h-4zM9.500 2.500h4v4h-4z" fill="#fff" stroke="#555" /></svg>;
const tree: { d: number; open?: boolean; icon: React.ReactNode; name: string; type: string; sel?: boolean }[] = [
  { d: 0, open: true, icon: <Chip $s={15} $c="#f0f0ef" />, name: 'notebook1', type: 'GtkNotebook' },
  { d: 1, open: true, icon: <VIcon />, name: 'vbox1', type: 'GtkVBox' },
  { d: 2, icon: <TIcon />, name: 'toolbar1', type: 'GtkToolbar' },
  { d: 2, open: true, icon: <TIcon />, name: 'toolbar2', type: 'GtkToolbar' },
  { d: 3, icon: <Chip $s={12} $c="#c8c8c8" />, name: 'toolbutton_estop', type: 'GtkToggleToolButton', sel: true },
  { d: 3, icon: <Chip $s={12} $c="#c8c8c8" />, name: 'toolbutton_power', type: 'GtkToggleToolButton' },
  { d: 3, icon: <Sep $w={12} $h={12} />, name: 'toolbutton1', type: 'GtkSeparatorToolItem' },
  { d: 3, icon: <Chip $s={12} $c="#f2f2f1" />, name: 'toolbutton_open', type: 'GtkToolButton' },
  { d: 3, icon: <Chip $s={12} $c="#f2f2f1" />, name: 'toolbutton_reload', type: 'GtkToolButton' },
];
const CloseMark = () => (
  <svg width="11" height="11" viewBox="0 0 11 11"><path d="M1.500 1.500l8 8M9.500 1.500l-8 8" stroke="#8a8c85" strokeWidth="3.400" /><path d="M2 2l7 7M9 2l-7 7" stroke="#c9cac5" strokeWidth="1" /></svg>
);
const toggles: [string, string, boolean, boolean][] = [
  ['Активен:', 'Не', false, false],
  ['Използване на „_“:', 'Да', true, true],
  ['Видим хоризонтално:', 'Да', true, false],
  ['Видим вертикално:', 'Да', true, false],
  ['Е важно:', 'Не', false, false],
];
const range = (n: number) => Array.from({ length: n }, (_, i) => i);

export default function App() {
  return (
    <Desktop>
      <Global />
      <Defs />
      <Taskbar>
        <AppsMenu><Icon n="xfce" size={24} />Applications Menu</AppsMenu>
        <Grip />
        <Task $faded><Icon n="notepad" size={16} />[mode.hal (~/linuxcnc/c...</Task>
        <Task><Icon n="glade" size={16} />*mygui.glade</Task>
        <Task><Icon n="fm" size={16} />MyGUIDINYO - File Mana...</Task>
        <Task $faded><Icon n="fm" size={16} />[linuxcnc - File Manager]</Task>
        <Tray>
          <Pager>
            <svg width="18" height="18" viewBox="0 0 18 18"><path d="M2 1.500h13v4H2z" fill="#f4f4f4" stroke="#888" /><rect x="1.500" y="4.500" width="14" height="13" fill="#a9cdfb" stroke="#fff" /></svg>
          </Pager>
          <Lcd><ClockFace time="8:52:49" /></Lcd>
          <TrayButton $framed aria-label="network"><Icon n="net" /></TrayButton>
          <TrayButton aria-label="logout"><Icon n="logout" /></TrayButton>
          <FlagBox><Flag /></FlagBox>
        </Tray>
      </Taskbar>

      <WindowTop>
        <TitleRow>
          <Icon n="glade" size={16} />
          <Title>*mygui.glade</Title>
          <WinControls kinds={['shade', 'min', 'restore', 'close']} color="#bfc0bc" />
        </TitleRow>
        <MenuRow>
          <button><u>Ф</u>айл</button>
          <button><u>Р</u>едактиране</button>
          <button><u>И</u>зглед</button>
          <button><u>П</u>роекти</button>
          <button>Помо<u>щ</u></button>
        </MenuRow>
      </WindowTop>
      <Toolbar>
        <Tool aria-label="new"><Icon n="newdoc" /></Tool>
        <Tool aria-label="open"><Icon n="folder" /></Tool>
        <Tool aria-label="save"><Icon n="save" /></Tool>
        <Sep />
        <Tool aria-label="undo"><Icon n="undo" size={20} /></Tool>
        <Tool $w={24} aria-label="undo list"><Arrow d="down" size={10} /></Tool>
        <Tool aria-label="redo"><Icon n="redo" size={20} /></Tool>
        <Tool $w={24} aria-label="redo list"><Arrow d="down" size={10} /></Tool>
        <Sep />
        <Tool aria-label="cut"><Icon n="cut" /></Tool>
        <Tool aria-label="copy"><Icon n="copy" /></Tool>
        <Tool aria-label="paste"><Icon n="paste" /></Tool>
        <Sep />
        <Tool $on aria-label="select"><Icon n="pointer" /></Tool>
        <Tool aria-label="drag"><Icon n="move" size={20} /></Tool>
      </Toolbar>

      <Main>
        <Palette>
          {groups.map(([title, icons]) => (
            <React.Fragment key={title}>
              <GroupHead><Tri open={!!icons} w={14} />{title}</GroupHead>
              {icons && <GroupIcons>{icons.split(' ').map((n, i) => <IconSlot key={i} aria-label={n}><Icon n={n} /></IconSlot>)}</GroupIcons>}
            </React.Fragment>
          ))}
        </Palette>

        <Notebook>
          <TabStrip>
            <DocTab $h={26}>mygui.glade <CloseMark /></DocTab>
            <DocTab $h={26} $on>*mygui.glade <CloseMark /></DocTab>
          </TabStrip>
          <Canvas>
            <Preview>
              <TabStrip>
                <Tab $h={22} $on>page 1</Tab>
                <Tab $h={22}>page 2</Tab>
                <Tab $h={22}>page 3</Tab>
              </TabStrip>
              <PreviewToolbar>
                <BigTool $w={58} $sel aria-label="estop"><Icon n="bigStop" size={48} /></BigTool>
                <BigTool $w={54} aria-label="power"><Icon n="bigPlug" size={48} /></BigTool>
                <Sep $w={12} $h={34} />
                <BigTool $w={56} aria-label="open"><Icon n="bigFolder" size={48} /></BigTool>
                <BigTool $w={54} aria-label="reload"><Icon n="reload" size={42} /></BigTool>
                <Sep $w={10} $h={34} />
                <BigTool $w={56} aria-label="run"><Icon n="bigPlay" size={36} /></BigTool>
                <BigTool $w={58} aria-label="step"><Icon n="bigFf" size={44} /></BigTool>
                <BigTool $w={54} aria-label="pause"><Icon n="bigPause" size={36} /></BigTool>
                <BigTool $w={58} aria-label="stop"><Icon n="bigSq" size={34} /></BigTool>
              </PreviewToolbar>
              <PreviewBody>
                {['#006400', '#640000'].map(color => (
                  <div key={color}>
                    {range(9).map(i => <LedRow key={i}><LedLabel>label</LedLabel><Led $c={color} /><Hatch /></LedRow>)}
                  </div>
                ))}
                <Dro>
                  {['X', 'Y', 'Z'].map(a => (
                    <DroAxis key={a}>
                      <DroMain><span>{a}<sub>Rel</sub></span><span>9999.999</span></DroMain>
                      <DroSub><i /><span>Abs</span><span>10.123</span><i /><span>DTG</span><span>0.000</span></DroSub>
                    </DroAxis>
                  ))}
                </Dro>
              </PreviewBody>
              <PreviewButtons>{range(6).map(i => <PreviewButton key={i}>button</PreviewButton>)}</PreviewButtons>
            </Preview>
          </Canvas>
        </Notebook>

        <Inspector>
          <Search aria-label="search" placeholder="< търсене на графични обекти >" />
          <TreeArea>
            <TreeView>
              <TreeTable><tbody>
                {tree.map(r => (
                  <tr key={r.name}><td>
                    <TreeLine $depth={r.d} $sel={r.sel}>
                      <i>{r.open && <Tri open w={11} />}</i>
                      <IconCell>{r.icon}</IconCell>
                      <span>{r.name}</span><em>{r.type}</em>
                    </TreeLine>
                  </td></tr>
                ))}
              </tbody></TreeTable>
            </TreeView>
            <Scroll v a={7} t={44} b={92} />
            <Scroll a={0} t={217} b={105} />
          </TreeArea>
          <PropsTitle><Chip $s={16} $c="#c8c8c8" />Свойства на Бутон за превключване на инстр...</PropsTitle>
          <TabStrip>
            <PropTab $h={27} $on><span><u>О</u>сновни</span></PropTab>
            <PropTab $h={27}><span>П<u>а</u>кетиране</span></PropTab>
            <PropTab $h={27}><span>О<u>б</u>щи</span></PropTab>
            <PropTab $h={27}><span><u>С</u>игнали</span></PropTab>
            <PropTab $h={27} aria-label="accessibility"><Icon n="wheel" size={20} /></PropTab>
          </TabStrip>
          <PropsPage>
            <PropsScroll>
              <Form onSubmit={e => e.preventDefault()}>
                <FormRow $h={24} $c={160}>
                  <Label htmlFor="name">Име:</Label>
                  <Input id="name" defaultValue="toolbutton_estop" />
                </FormRow>
                {toggles.map(([label, value, on, bold], i) => (
                  <FormRow key={label} $h={23} $c={160}>
                    <Label $b={bold} htmlFor={'t' + i}>{label}</Label>
                    <Toggle id={'t' + i} type="button" $on={on}>{value}</Toggle>
                  </FormRow>
                ))}
                <SectionTitle $top={5} $bottom={7}>Действие</SectionTitle>
                <FormRow $h={30} $c={180} $pad={14}>
                  <Label htmlFor="act">Свързано<br />действие:</Label>
                  <Pair><Input id="act" /><More type="button">...</More></Pair>
                </FormRow>
                <FormRow $h={45} $c={180} $pad={14}>
                  <Label $b htmlFor="use">Използване на<br />изглед според<br />действието:</Label>
                  <Toggle id="use" type="button" $h={45}>Не</Toggle>
                </FormRow>
                <SectionTitle $top={19} $bottom={7}>Редактиране на етикет</SectionTitle>
                <FormRow $h={25} $c={181} $pad={19}>
                  <RadioLabel $b><Radio type="radio" name="lab" defaultChecked /><span>Етикет:</span></RadioLabel>
                  <Pair><Input aria-label="Етикет" defaultValue="ESTOP" /><More type="button">...</More></Pair>
                </FormRow>
                <FormRow $h={45} $c={181} $pad={19}>
                  <RadioLabel><Radio type="radio" name="lab" /><span>Графичен<br />обект<br />„Етикет“:</span></RadioLabel>
                  <Pair><Input aria-label="Графичен обект" /><More type="button">...</More></Pair>
                </FormRow>
                <SectionTitle $top={23} $bottom={7}>Редактиране на изображение</SectionTitle>
                <FormRow $h={60} $c={184} $pad={19}>
                  <RadioLabel $b><Radio type="radio" name="img" defaultChecked /><span>Номенклат<br />урен<br />идентифик<br />атор:</span></RadioLabel>
                  <Pair><Select aria-label="Номенклатурен идентификатор"><option>gtk-stop</option></Select><More type="button" $w={24} aria-label="open list"><Arrow d="down" size={9} /></More></Pair>
                </FormRow>
                <FormRow $h={30} $c={184} $pad={19}>
                  <RadioLabel><Radio type="radio" name="img" /><span>Име на<br />икона:</span></RadioLabel>
                  <Pair><Input aria-label="Име на икона" /><More type="button">...</More></Pair>
                </FormRow>
                <FormRow $h={25} $c={184} $pad={19}>
                  <RadioLabel><Radio type="radio" name="img" /><span>Икона:</span><Icon n="warn" size={16} /></RadioLabel>
                  <Pair><Input aria-label="Икона" disabled /><More type="button" $w={24} aria-label="browse"><Icon n="folderGrey" size={16} /></More></Pair>
                </FormRow>
                <FormRow $h={45} $c={184} $pad={19}>
                  <RadioLabel><Radio type="radio" name="img" /><span>Графичен<br />обект<br />„Икона“:</span></RadioLabel>
                  <Pair><Input aria-label="Графичен обект икона" /><More type="button">...</More></Pair>
                </FormRow>
              </Form>
              <Scroll v a={0} t={475} b={40} />
              <Scroll a={0} t={306} b={1} />
            </PropsScroll>
          </PropsPage>
          <FootTools>
            <FootButton aria-label="documentation"><Icon n="book" /></FootButton>
            <FootButton aria-label="reset"><Icon n="broom" /></FootButton>
          </FootTools>
        </Inspector>
      </Main>
      <StatusBar />

      <Dialog role="dialog" aria-label="Избор на Действие в този проект">
        <DialogTitle>
          <Icon n="glade" size={16} />
          <Title $light>Избор на Действие в този проект</Title>
          <WinControls kinds={['shade', 'max', 'close']} color="#fff" />
        </DialogTitle>
        <DialogBody>
          <div><u>О</u>бекти:</div>
          <ObjectList />
          <DialogActions>
            <DialogButton><Icon n="stop" size={22} /><span><u>О</u>тказване</span></DialogButton>
            <DialogButton><Icon n="broom" /><span><u>И</u>зчистване</span></DialogButton>
            <DialogButton><span><u>Н</u>ов</span></DialogButton>
            <DialogButton><Icon n="enter" size={20} /><span><u>Д</u>обре</span></DialogButton>
          </DialogActions>
        </DialogBody>
      </Dialog>

      <Marks width="1280" height="1024" viewBox="0 0 1280 1024" aria-hidden="true">
        <g fill="none" stroke={c.red} strokeWidth="4" strokeLinecap="round" strokeLinejoin="round">
          <path d="M2 684H259V842" />
          <path d="M3 685v17l2 50 2 80 60 2 100 5 97 4" />
          <path d="M257 775l133-71 98-50M453 654l32-4M471 679l17-26" />
          <path d="M775 568l130 9 100 9 94 9M1073 580l26 15-26 8" />
        </g>
        <path d="M800 746v11.500l2.500-2.500 3 5.500 1.500-1-2.500-5H808z" fill="#000" />
      </Marks>
    </Desktop>
  );
}
